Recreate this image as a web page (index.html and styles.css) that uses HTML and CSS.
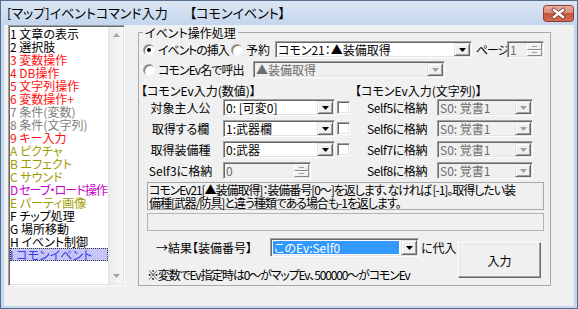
FILE: index.html
```html
<!DOCTYPE html>
<html lang="ja">
<head>
<meta charset="utf-8">
<title>イベントコマンド入力</title>
<link rel="stylesheet" href="styles.css">
</head>
<body>
<div class="window">
  <div class="titlebar">
    <span class="title">[マップ]イベントコマンド入力</span><span class="title title-sub">【コモンイベント】</span>
    <span class="close">
      <svg width="31" height="17" viewBox="0 0 31 17">
        <defs>
          <linearGradient id="cg" x1="0" y1="0" x2="0" y2="1">
            <stop offset="0" stop-color="#eab2a4"/>
            <stop offset="0.45" stop-color="#d98a77"/>
            <stop offset="0.5" stop-color="#c9553d"/>
            <stop offset="1" stop-color="#d27058"/>
          </linearGradient>
        </defs>
        <rect x="0.5" y="0.5" width="30" height="16" rx="3" fill="url(#cg)" stroke="#8c3a2a"/>
        <path d="M11 5 L20 12 M20 5 L11 12" stroke="#6b3327" stroke-width="4" stroke-linecap="square"/>
        <path d="M11 5 L20 12 M20 5 L11 12" stroke="#ffffff" stroke-width="2.4" stroke-linecap="square"/>
      </svg>
    </span>
  </div>
  <div class="client">
    <div class="listbox">
      <ul class="items">
        <li>1 文章の表示</li>
        <li>2 選択肢</li>
        <li class="c-red">3 変数操作</li>
        <li class="c-red">4 DB操作</li>
        <li class="c-red">5 文字列操作</li>
        <li class="c-red">6 変数操作+</li>
        <li class="c-gray">7 条件(変数)</li>
        <li class="c-gray">8 条件(文字列)</li>
        <li class="c-red">9 キー入力</li>
        <li class="c-olive">A ピクチャ</li>
        <li class="c-olive">B エフェクト</li>
        <li class="c-olive">C サウンド</li>
        <li class="c-mag tight">D セーブ・ロード操作</li>
        <li class="c-olive">E パーティ画像</li>
        <li>F チップ処理</li>
        <li>G 場所移動</li>
        <li>H イベント制御</li>
        <li class="sel">I コモンイベント</li>
      </ul>
      <div class="vscroll">
        <span class="sb-btn"><svg width="7" height="4" viewBox="0 0 7 4"><path d="M0 4H7L3.5 0z" fill="#a3a3a3"/></svg></span>
        <span class="sb-track"></span>
        <span class="sb-btn"><svg width="7" height="4" viewBox="0 0 7 4"><path d="M0 0H7L3.5 4z" fill="#a3a3a3"/></svg></span>
      </div>
    </div>

    <fieldset class="group">
      <legend>イベント操作処理</legend>

      <div class="row row1">
        <span class="radio on"></span>
        <span class="lbl w-insert">イベントの挿入</span>
        <span class="radio ml-4"></span>
        <span class="lbl w-yoyaku">予約</span>
        <div class="combo w-common">
          <span class="combo-text">コモン21：▲装備取得</span>
          <span class="combo-btn"><svg width="7" height="4" viewBox="0 0 7 4"><path d="M0 0H7L3.5 4z" fill="#000"/></svg></span>
        </div>
        <span class="lbl w-page">ページ</span>
        <div class="spin dis w-pspin">
          <span class="spin-text">1</span>
          <span class="spin-btns"><span class="spin-b"></span><span class="spin-b"></span></span>
        </div>
      </div>

      <div class="row row2">
        <span class="radio"></span>
        <span class="lbl w-call">コモンEv名で呼出</span>
        <div class="combo dis w-name">
          <span class="combo-text">▲装備取得</span>
          <span class="combo-btn"><svg width="7" height="4" viewBox="0 0 7 4"><path d="M0 0H7L3.5 4z" fill="#a0a0a0"/></svg></span>
        </div>
      </div>

      <div class="cols">
        <div class="col">
          <div class="col-head">【コモンEv入力(数値)】</div>
          <div class="crow">
            <span class="clbl">対象主人公</span>
            <div class="combo w-num">
              <span class="combo-text">0: [可変0]</span>
              <span class="combo-btn"><svg width="7" height="4" viewBox="0 0 7 4"><path d="M0 0H7L3.5 4z" fill="#000"/></svg></span>
            </div>
            <span class="check"></span>
          </div>
          <div class="crow">
            <span class="clbl">取得する欄</span>
            <div class="combo w-num">
              <span class="combo-text">1:武器欄</span>
              <span class="combo-btn"><svg width="7" height="4" viewBox="0 0 7 4"><path d="M0 0H7L3.5 4z" fill="#000"/></svg></span>
            </div>
            <span class="check"></span>
          </div>
          <div class="crow">
            <span class="clbl">取得装備種</span>
            <div class="combo w-num">
              <span class="combo-text">0:武器</span>
              <span class="combo-btn"><svg width="7" height="4" viewBox="0 0 7 4"><path d="M0 0H7L3.5 4z" fill="#000"/></svg></span>
            </div>
            <span class="check"></span>
          </div>
          <div class="crow">
            <span class="clbl">Self3に格納</span>
            <div class="spin dis w-sspin">
              <span class="spin-text">0</span>
              <span class="spin-btns"><span class="spin-b"></span><span class="spin-b"></span></span>
            </div>
          </div>
        </div>
        <div class="col">
          <div class="col-head">【コモンEv入力(文字列)】</div>
          <div class="crow">
            <span class="clbl w-slbl">Self5に格納</span>
            <div class="combo dis w-str">
              <span class="combo-text">S0: 覚書1</span>
              <span class="combo-btn"><svg width="7" height="4" viewBox="0 0 7 4"><path d="M0 0H7L3.5 4z" fill="#a0a0a0"/></svg></span>
            </div>
          </div>
          <div class="crow">
            <span class="clbl w-slbl">Self6に格納</span>
            <div class="combo dis w-str">
              <span class="combo-text">S0: 覚書1</span>
              <span class="combo-btn"><svg width="7" height="4" viewBox="0 0 7 4"><path d="M0 0H7L3.5 4z" fill="#a0a0a0"/></svg></span>
            </div>
          </div>
          <div class="crow">
            <span class="clbl w-slbl">Self7に格納</span>
            <div class="combo dis w-str">
              <span class="combo-text">S0: 覚書1</span>
              <span class="combo-btn"><svg width="7" height="4" viewBox="0 0 7 4"><path d="M0 0H7L3.5 4z" fill="#a0a0a0"/></svg></span>
            </div>
          </div>
          <div class="crow">
            <span class="clbl w-slbl">Self8に格納</span>
            <div class="combo dis w-str">
              <span class="combo-text">S0: 覚書1</span>
              <span class="combo-btn"><svg width="7" height="4" viewBox="0 0 7 4"><path d="M0 0H7L3.5 4z" fill="#a0a0a0"/></svg></span>
            </div>
          </div>
        </div>
      </div>

      <div class="desc"><span class="dline">コモンEv21[▲装備取得]：装備番号[0～]を返します、なければ [-1]。取得したい装</span><span class="dline">備種[武器/防具]と違う種類である場合も-1を返します。</span></div>
      <div class="emptybox"></div>

      <div class="bottom">
        <div class="bottom-left">
          <div class="brow">
            <span class="lbl w-result">→結果【装備番号】</span>
            <div class="combo w-result-combo">
              <span class="combo-text hl">このEv:Self0</span>
              <span class="combo-btn"><svg width="7" height="4" viewBox="0 0 7 4"><path d="M0 0H7L3.5 4z" fill="#000"/></svg></span>
            </div>
            <span class="lbl ml-2">に代入</span>
          </div>
          <div class="note">※変数でEv指定時は0～がマップEv、500000～がコモンEv</div>
        </div>
        <button class="btn" type="button">入力</button>
      </div>
    </fieldset>
  </div>
</div>
</body>
</html>
```
FILE: styles.css
```css
* { box-sizing: border-box; }
html, body { margin: 0; padding: 0; }
body {
  width: 578px;
  height: 309px;
  overflow: hidden;
  background: #c4d5eb;
  font-family: "Noto Sans CJK JP", "Noto Sans", sans-serif;
  font-size: 12px;
  line-height: 13px;
  color: #000;
  font-feature-settings: "palt" 1;
}

.window {
  width: 578px;
  height: 309px;
  display: flex;
  flex-direction: column;
  border: 1px solid #55708f;
  background: linear-gradient(#dbe6f4 0, #c4d6ed 24px, #c4d6ed 100%);
}

.titlebar {
  height: 24px;
  flex: none;
  display: flex;
  align-items: flex-start;
  padding-left: 6px;
}
.title {
  font-size: 13px;
  line-height: 14px;
  margin-top: 5px;
  white-space: nowrap;
}
.title-sub { margin-left: 22px; }
.close {
  margin-left: auto;
  margin-right: 3px;
  margin-top: 4px;
  width: 31px;
  height: 17px;
  display: block;
}
.close svg { display: block; }

.client {
  flex: 1;
  margin: 0 3px 2px 3px;
  background: #f0f0f0;
  display: flex;
  align-items: flex-start;
  padding-left: 4px;
}

/* list box */
.listbox {
  width: 117px;
  height: 261px;
  flex: none;
  display: flex;
  background: #fff;
  border: 1px solid;
  border-color: #a0a0a0 #fff #fff #a0a0a0;
  box-shadow: inset 1px 1px 0 #696969, inset -1px -1px 0 #e3e3e3;
  padding: 1px;
}
.items {
  list-style: none;
  margin: 0;
  padding: 0;
  flex: 1;
  min-width: 0;
}
.items li {
  height: 13px;
  line-height: 13px;
  white-space: nowrap;
}
.items li.tight { letter-spacing: -0.9px; }
.c-red { color: #ff1010; }
.c-gray { color: #808080; }
.c-olive { color: #9c9c00; }
.c-mag { color: #c800c8; }
.items li.sel {
  background: #c6c6f6;
  color: #3c3cf0;
  outline: 1px dotted #333;
  outline-offset: -1px;
}
.vscroll {
  width: 15px;
  flex: none;
  display: flex;
  flex-direction: column;
  background: linear-gradient(90deg, #ebebeb, #f7f7f7);
  border-left: 1px solid #e4e4e4;
}
.sb-btn {
  height: 16px;
  display: flex;
  align-items: center;
  justify-content: center;
}
.sb-track { flex: 1; }

/* group box */
.group {
  margin: 1px 0 0 13px;
  width: 413px;
  height: 260px;
  border: 1px solid #a8a8a8;
  padding: 0 4px;
  flex: none;
  min-width: 0;
}
.group legend {
  padding: 0 2px;
  line-height: 13px;
}

.row {
  display: flex;
  align-items: center;
  height: 17px;
  white-space: nowrap;
}
.row1 { margin-top: 2px; }
.row2 { margin-top: 3px; }

.lbl { display: inline-block; white-space: nowrap; }
.w-insert { width: 70px; margin-left: 3px; letter-spacing: -1.1px; }
.ml-4 { margin-left: 3px; }
.ml-2 { margin-left: 2px; }
.w-yoyaku { width: 24px; margin-left: 3px; }
.w-common { width: 197px; margin-left: 5px; }
.w-page { width: 30px; margin-left: 4px; letter-spacing: -1.2px; }
.w-pspin { width: 37px; margin-left: 1px; }
.w-call { width: 96px; margin-left: 3px; letter-spacing: -0.9px; }
.w-name { width: 192px; margin-left: -1px; }

/* radio / check */
.radio {
  width: 12px;
  height: 12px;
  flex: none;
  border-radius: 50%;
  background: #fff;
  border: 1px solid;
  border-color: #a0a0a0 #f4f4f4 #f4f4f4 #a0a0a0;
  box-shadow: inset 1px 1px 0 #707070;
  display: flex;
  align-items: center;
  justify-content: center;
}
.radio.on::after {
  content: "";
  width: 4px;
  height: 4px;
  border-radius: 50%;
  background: #000;
}
.check {
  width: 13px;
  height: 13px;
  flex: none;
  margin-left: 2px;
  background: #fff;
  border: 1px solid;
  border-color: #a0a0a0 #fff #fff #a0a0a0;
  box-shadow: inset 1px 1px 0 #696969, inset -1px -1px 0 #e3e3e3;
}

/* combo */
.combo {
  display: flex;
  flex: none;
  height: 17px;
  background: #fff;
  border: 1px solid;
  border-color: #a0a0a0 #fff #fff #a0a0a0;
  box-shadow: inset 1px 1px 0 #696969, inset -1px -1px 0 #e3e3e3;
  padding: 1px;
}
.combo-text {
  flex: 1;
  min-width: 0;
  padding-left: 1px;
  line-height: 13px;
  white-space: nowrap;
}
.combo-text.hl {
  background: #3399ff;
  color: #fff;
  margin: 1px 2px 1px 1px;
  line-height: 13px;
}
.combo-btn {
  width: 16px;
  flex: none;
  background: #f0f0f0;
  border: 1px solid;
  border-color: #e3e3e3 #696969 #696969 #e3e3e3;
  box-shadow: inset 1px 1px 0 #fff, inset -1px -1px 0 #a0a0a0;
  display: flex;
  align-items: center;
  justify-content: center;
}
.combo-btn svg { display: block; }
.combo.dis { background: #f0f0f0; color: #6d6d6d; }

/* spin */
.spin {
  display: flex;
  flex: none;
  height: 17px;
  background: #fff;
  border: 1px solid;
  border-color: #a0a0a0 #fff #fff #a0a0a0;
  box-shadow: inset 1px 1px 0 #696969, inset -1px -1px 0 #e3e3e3;
  padding: 1px;
}
.spin.dis { background: #f0f0f0; color: #6d6d6d; }
.spin-text { flex: 1; padding-left: 1px; line-height: 13px; }
.spin-btns {
  width: 15px;
  flex: none;
  display: flex;
  flex-direction: column;
}
.spin-b {
  flex: 1;
  background: #f0f0f0;
  border: 1px solid;
  border-color: #fff #8a8a8a #8a8a8a #fff;
  display: flex;
  align-items: center;
  justify-content: center;
}
.spin-b::after {
  content: "";
  width: 5px;
  height: 1px;
  background: #a0a0a0;
}
.w-sspin { width: 88px; margin-left: 5px; }

/* columns */
.cols {
  display: grid;
  grid-template-columns: 214px 189px;
  margin-top: 6px;
}
.col {
  display: flex;
  flex-direction: column;
  gap: 4px;
}
.col-head {
  height: 13px;
  margin-left: -2px;
  margin-bottom: -2px;
  white-space: nowrap;
}
.crow {
  display: flex;
  align-items: center;
  height: 17px;
}
.clbl {
  width: 75px;
  text-align: center;
  white-space: nowrap;
  flex: none;
}
.w-num { width: 112px; margin-left: 5px; }
.w-slbl { width: 80px; letter-spacing: -0.4px; }
.w-str { width: 96px; }

/* description */
.desc {
  margin: 3px 0 0 4px;
  width: 397px;
  height: 28px;
  border: 1px solid #a8a8a8;
  padding: 0 1px;
}
.dline {
  display: block;
  white-space: nowrap;
  letter-spacing: -1.05px;
}
.emptybox {
  margin: 3px 0 0 4px;
  width: 397px;
  height: 18px;
  border: 1px solid #b4b4b4;
}

/* bottom */
.bottom { display: flex; align-items: flex-start; }
.bottom-left { width: 315px; flex: none; }
.brow {
  display: flex;
  align-items: center;
  height: 19px;
  margin-top: 7px;
  white-space: nowrap;
}
.w-result { width: 94px; margin-left: 13px; }
.w-result-combo { width: 149px; height: 19px; margin-left: 20px; }
.note {
  margin: 11px 0 0 4px;
  white-space: nowrap;
  letter-spacing: -1.15px;
}
.btn {
  width: 83px;
  height: 36px;
  margin-top: 11px;
  padding: 0;
  background: #f0f0f0;
  border: 1px solid;
  border-color: #fff #696969 #696969 #fff;
  box-shadow: inset -1px -1px 0 #a0a0a0, inset 1px 1px 0 #e3e3e3;
  font: inherit;
  color: #000;
  display: flex;
  align-items: center;
  justify-content: center;
}
```
